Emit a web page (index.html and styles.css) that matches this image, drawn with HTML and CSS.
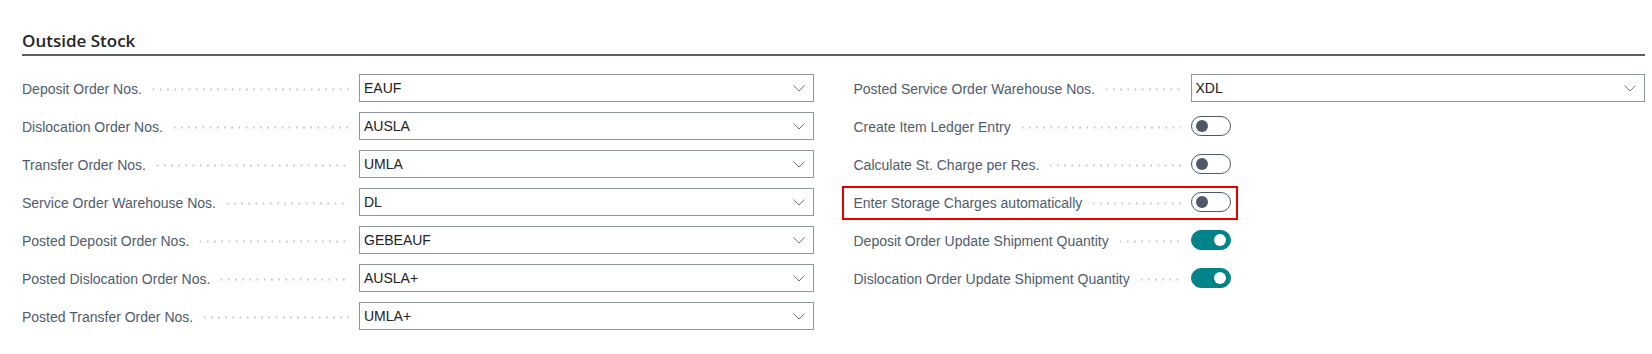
FILE: index.html
```html
<!DOCTYPE html>
<html lang="en">
<head>
    <meta charset="UTF-8">
    <meta name="viewport" content="width=device-width, initial-scale=1.0">
    <title>Outside Stock</title>
    <link rel="stylesheet" href="styles.css">
</head>
<body>
    <div class="page">
        <h2 class="section-title">Outside Stock</h2>

        <div class="fields">
            <div class="column">
                <div class="field">
                    <div class="caption"><span>Deposit Order Nos.</span><span class="leader"></span></div>
                    <div class="select"><span>EAUF</span><svg class="chevron" width="12" height="7" viewBox="0 0 12 7"><path d="M0.5 0.5 L6 6 L11.5 0.5" /></svg></div>
                </div>
                <div class="field">
                    <div class="caption"><span>Dislocation Order Nos.</span><span class="leader"></span></div>
                    <div class="select"><span>AUSLA</span><svg class="chevron" width="12" height="7" viewBox="0 0 12 7"><path d="M0.5 0.5 L6 6 L11.5 0.5" /></svg></div>
                </div>
                <div class="field">
                    <div class="caption"><span>Transfer Order Nos.</span><span class="leader"></span></div>
                    <div class="select"><span>UMLA</span><svg class="chevron" width="12" height="7" viewBox="0 0 12 7"><path d="M0.5 0.5 L6 6 L11.5 0.5" /></svg></div>
                </div>
                <div class="field">
                    <div class="caption"><span>Service Order Warehouse Nos.</span><span class="leader"></span></div>
                    <div class="select"><span>DL</span><svg class="chevron" width="12" height="7" viewBox="0 0 12 7"><path d="M0.5 0.5 L6 6 L11.5 0.5" /></svg></div>
                </div>
                <div class="field">
                    <div class="caption"><span>Posted Deposit Order Nos.</span><span class="leader"></span></div>
                    <div class="select"><span>GEBEAUF</span><svg class="chevron" width="12" height="7" viewBox="0 0 12 7"><path d="M0.5 0.5 L6 6 L11.5 0.5" /></svg></div>
                </div>
                <div class="field">
                    <div class="caption"><span>Posted Dislocation Order Nos.</span><span class="leader"></span></div>
                    <div class="select"><span>AUSLA+</span><svg class="chevron" width="12" height="7" viewBox="0 0 12 7"><path d="M0.5 0.5 L6 6 L11.5 0.5" /></svg></div>
                </div>
                <div class="field">
                    <div class="caption"><span>Posted Transfer Order Nos.</span><span class="leader"></span></div>
                    <div class="select"><span>UMLA+</span><svg class="chevron" width="12" height="7" viewBox="0 0 12 7"><path d="M0.5 0.5 L6 6 L11.5 0.5" /></svg></div>
                </div>
            </div>

            <div class="column">
                <div class="field">
                    <div class="caption"><span>Posted Service Order Warehouse Nos.</span><span class="leader"></span></div>
                    <div class="select"><span>XDL</span><svg class="chevron" width="12" height="7" viewBox="0 0 12 7"><path d="M0.5 0.5 L6 6 L11.5 0.5" /></svg></div>
                </div>
                <div class="field">
                    <div class="caption"><span>Create Item Ledger Entry</span><span class="leader"></span></div>
                    <div class="control"><span class="toggle"><span class="knob"></span></span></div>
                </div>
                <div class="field">
                    <div class="caption"><span>Calculate St. Charge per Res.</span><span class="leader"></span></div>
                    <div class="control"><span class="toggle"><span class="knob"></span></span></div>
                </div>
                <div class="field marked">
                    <div class="caption"><span>Enter Storage Charges automatically</span><span class="leader"></span></div>
                    <div class="control"><span class="toggle"><span class="knob"></span></span></div>
                    <span class="mark-frame"></span>
                </div>
                <div class="field">
                    <div class="caption"><span>Deposit Order Update Shipment Quantity</span><span class="leader"></span></div>
                    <div class="control"><span class="toggle on"><span class="knob"></span></span></div>
                </div>
                <div class="field">
                    <div class="caption"><span>Dislocation Order Update Shipment Quantity</span><span class="leader"></span></div>
                    <div class="control"><span class="toggle on"><span class="knob"></span></span></div>
                </div>
            </div>
        </div>
    </div>
</body>
</html>
```

FILE: styles.css
```css
body {
    margin: 0;
    background-color: #ffffff;
    font-family: "Liberation Sans", Arial, sans-serif;
    font-size: 14px;
    color: #212121;
}
.page {
    padding: 30px 7px 0 22px;
}
.section-title {
    margin: 0;
    font-family: "Open Sans", "Liberation Sans", sans-serif;
    font-size: 17px;
    font-weight: 600;
    line-height: 22px;
    color: #262626;
    padding-bottom: 2px;
    border-bottom: 2px solid #5a6069;
}
.fields {
    display: grid;
    grid-template-columns: 1fr 1fr;
    column-gap: 40px;
    margin-top: 18px;
}
.column {
    display: flex;
    flex-direction: column;
    gap: 10px;
}
.field {
    display: flex;
    align-items: center;
    height: 28px;
}
.caption {
    flex: none;
    width: 337px;
    display: flex;
    align-items: center;
    color: #505c6d;
    white-space: nowrap;
    padding-top: 1px;
}
.leader {
    flex: 1;
    height: 3px;
    margin: 2px 10px 0 8px;
    background-image: radial-gradient(circle, #c8ccd1 0.9px, transparent 1.3px);
    background-size: 7.2px 3px;
    background-repeat: repeat-x;
}
.select {
    flex: 1;
    box-sizing: border-box;
    height: 28px;
    display: flex;
    align-items: center;
    justify-content: space-between;
    padding: 0 8px 0 4px;
    border: 1px solid #8d96a1;
    color: #212121;
}
.chevron path {
    fill: none;
    stroke: #6d7580;
    stroke-width: 1;
}
.control {
    flex: 1;
    display: flex;
    align-items: center;
}
.toggle {
    box-sizing: border-box;
    width: 40px;
    height: 20px;
    display: flex;
    align-items: center;
    padding: 0 4px;
    border: 1px solid #4f5866;
    border-radius: 10px;
}
.knob {
    width: 12px;
    height: 12px;
    border-radius: 50%;
    background-color: #4f5866;
}
.toggle.on {
    justify-content: flex-end;
    background-color: #008489;
    border-color: #008489;
}
.toggle.on .knob {
    background-color: #ffffff;
}
.marked {
    position: relative;
}
.mark-frame {
    position: absolute;
    left: -12px;
    top: -2px;
    width: 396px;
    height: 34px;
    box-sizing: border-box;
    border: 2px solid #e60000;
}
```
